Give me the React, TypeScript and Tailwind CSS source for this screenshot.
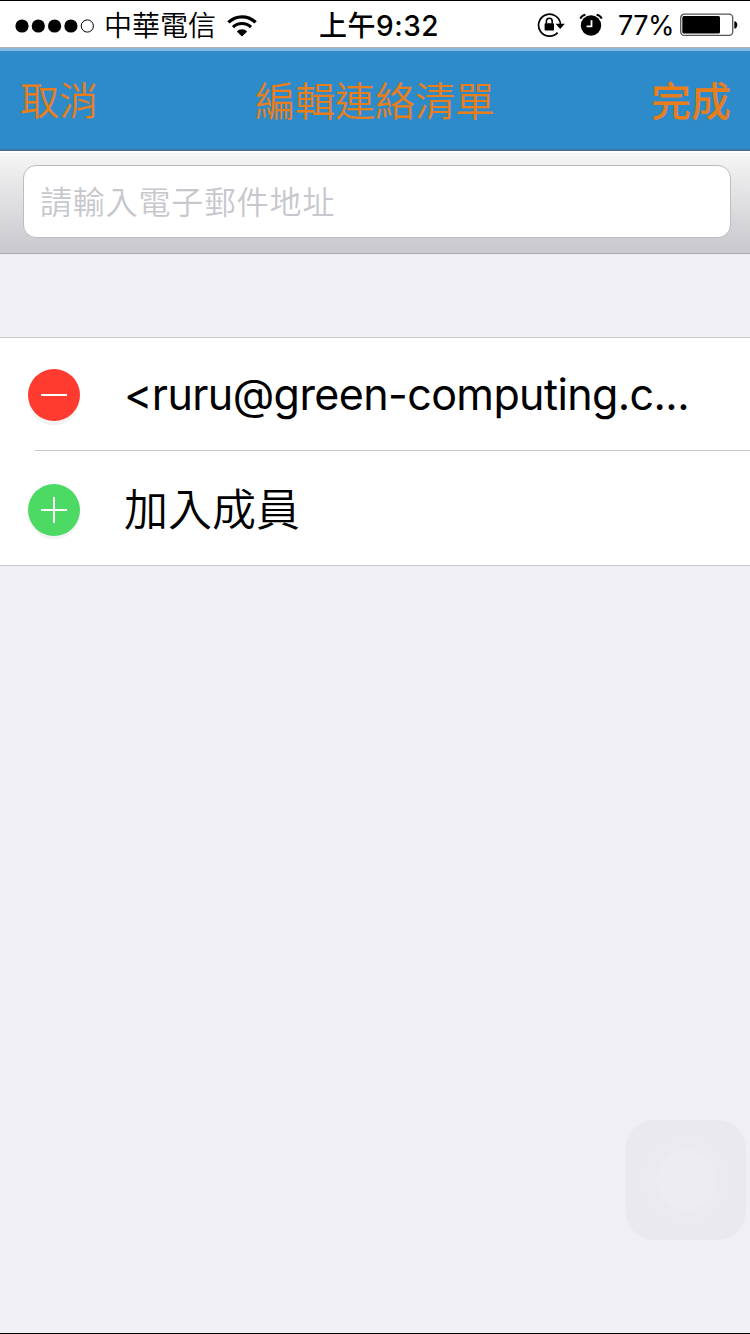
import React from "react";

const CJK = "font-['Inter','Noto_Sans_CJK_TC',sans-serif]";

function Signal() {
  return (
    <svg width="80" height="16" viewBox="0 0 80 16">
      {[7, 23.3, 39.6, 55.9].map((x) => (
        <circle key={x} cx={x} cy="8" r="6.6" />
      ))}
      <circle cx="72.3" cy="8" r="6.1" fill="none" stroke="#000" strokeWidth="1" />
    </svg>
  );
}

function Wifi() {
  return (
    <svg width="30" height="22" viewBox="0 0 30 22" fill="none" stroke="#000">
      <path d="M1.4 7.4a19.3 19.3 0 0 1 27.2 0" strokeWidth="3.3" />
      <path d="M6 12.2a12.8 12.8 0 0 1 18 0" strokeWidth="3.1" />
      <path d="M9.8 16.4a7.4 7.4 0 0 1 10.4 0L15 21.5Z" fill="#000" stroke="none" />
    </svg>
  );
}

function RotationLock() {
  return (
    <svg width="28" height="26" viewBox="0 0 28 26" fill="none" stroke="#000">
      <path d="M20.6 20.7A11 11 0 1 1 23.5 12" strokeWidth="1.7" />
      <path d="M18.6 11.7h9.2l-4.6 5.4Z" fill="#000" stroke="none" />
      <rect x="7.6" y="11.3" width="9.4" height="7.2" rx="0.8" fill="#000" stroke="none" />
      <path d="M9.4 11.5V9.2a2.9 2.9 0 0 1 5.8 0v2.3" strokeWidth="1.6" />
    </svg>
  );
}

function Alarm() {
  return (
    <svg width="24" height="24" viewBox="0 0 24 24" fill="none" stroke="#000">
      <circle cx="12" cy="12.5" r="10.2" fill="#000" stroke="none" />
      <path d="M12.5 7.2v6.2H7.6" stroke="#fff" strokeWidth="1.8" />
      <path d="M1.3 5.6A7 7 0 0 1 6.4 1.7M17.6 1.7a7 7 0 0 1 5.1 3.9" strokeWidth="2" />
    </svg>
  );
}

function Battery() {
  return (
    <svg width="58" height="24" viewBox="0 0 58 24">
      <rect x="0.7" y="1.2" width="52" height="21.2" rx="3.6" fill="none" stroke="#555" strokeWidth="1.3" />
      <rect x="2.3" y="3" width="37.7" height="17.6" rx="1.5" />
      <path d="M54.3 8.2c4 0 4 7.4 0 7.4Z" />
    </svg>
  );
}

function StatusBar() {
  return (
    <div className="flex h-[47px] border-t border-black bg-white text-[28px] leading-[46px] text-black">
      <div className="flex w-[319px] items-center pt-[3px] pl-[15px]">
        <Signal />
        <span className="ml-[9px] w-[112px] pt-[1px] font-[350]">中華電信</span>
        <span className="ml-[11px]"><Wifi /></span>
      </div>
      <div className="w-[218px] pt-[2px] font-medium tracking-[0.5px]">上午9:32</div>
      <div className="flex items-center pt-[2px]">
        <RotationLock />
        <span className="ml-[14px]"><Alarm /></span>
        <span className="ml-[15px] w-[62px] pt-[2px] text-[27px] tracking-[-0.5px]">77%</span>
        <Battery />
      </div>
    </div>
  );
}

function NavBar() {
  return (
    <div className="h-[104px] border-t border-[#adb0b5] text-[40px] text-[#e87e1b]">
      <div className="flex h-[103px] items-center justify-between border-t-[3px] border-b-2 border-t-[#85b8dc] border-b-[#406f9b] bg-[#2e8bca] px-[19px] pt-[3px]">
        <div className="w-[80px] pl-[1px] text-[39px] font-[350] whitespace-nowrap">取消</div>
        <div className="font-[350]">編輯連絡清單</div>
        <div className="w-[80px] font-medium">完成</div>
      </div>
    </div>
  );
}

function SearchBar() {
  return (
    <div className="h-[103px] border-t-2 border-b border-t-white border-b-[#a9a9b3] bg-linear-to-b from-[#f6f6f6] to-[#c8c8cd] pt-[12px] pr-[19px] pl-[23px]">
      <div className="flex h-[73px] items-center rounded-[13px] border border-[#bdbdc1] bg-white pt-[3px] pl-[16px] text-[32px] leading-[70px] font-[350] tracking-[0.8px] text-[#c7c7cd]">
        請輸入電子郵件地址
      </div>
    </div>
  );
}

function RoundButton({ add = false }: { add?: boolean }) {
  return (
    <svg className="shrink-0" width="54" height="60" viewBox="0 0 54 60">
      <circle cx="27" cy={add ? 31 : 32} r="25.4" fill="#f3f3f3" />
      <circle cx="27" cy="27" r="26" fill={add ? "#4cd964" : "#ff3b30"} />
      <path d={add ? "M14 27h26M27 14v26" : "M14 27h26"} stroke="#fff" strokeWidth="2" />
    </svg>
  );
}

export default function App() {
  return (
    <div className={"flex h-[1334px] w-[750px] flex-col overflow-hidden border-b border-black bg-[#efeff4] " + CJK}>
      <StatusBar />
      <NavBar />
      <SearchBar />
      <div className="mt-[83px] h-[229px] shrink-0 border-t border-b border-[#c8c7cc] bg-white text-[44px] text-black">
        <div className="flex h-[112px] pl-[27px]">
          <div className="pt-[30px]"><RoundButton /></div>
          <div className="ml-[43px] text-[43px] leading-[112px] tracking-[-0.6px] whitespace-nowrap">&lt;ruru@green-computing.c...</div>
        </div>
        <div className="ml-[35px] h-px bg-[#c8c7cc]" />
        <div className="flex h-[114px] pl-[27px]">
          <div className="pt-[32px]"><RoundButton add /></div>
          <div className="ml-[43px] pt-[2px] leading-[114px] font-[350]">加入成員</div>
        </div>
      </div>
      <div className="mt-[554px] ml-[626px] flex h-[120px] w-[120px] shrink-0 items-center justify-center rounded-[28px] bg-[#eaeaee]">
        <div className="flex h-[90px] w-[90px] items-center justify-center rounded-full bg-[#ebebef]">
          <div className="h-[60px] w-[60px] rounded-full bg-[#ededf1]" />
        </div>
      </div>
    </div>
  );
}
